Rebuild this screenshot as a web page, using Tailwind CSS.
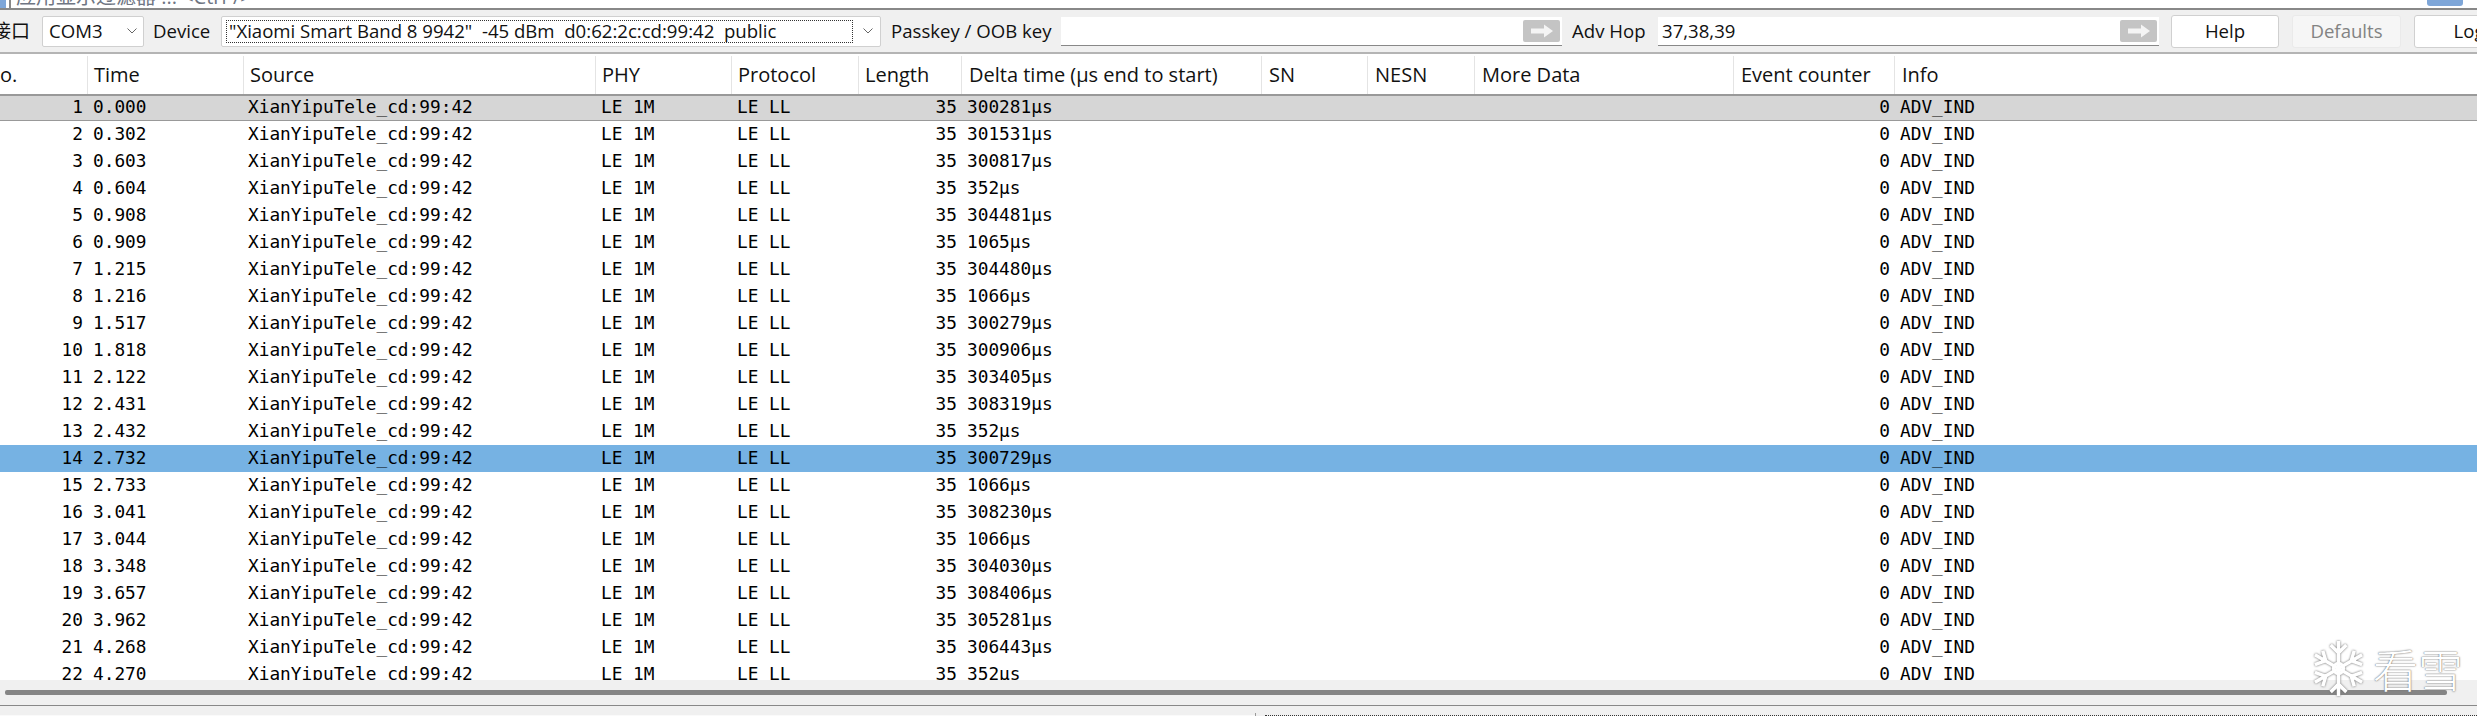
<!DOCTYPE html>
<html lang="zh">
<head>
<meta charset="UTF-8">
<title>Sniffer</title>
<script src="https://cdn.jsdelivr.net/npm/@tailwindcss/browser@4"></script>
</head>
<body class="w-[2477px] h-[716px] overflow-hidden bg-white font-['Open_Sans','Noto_Sans_CJK_SC',sans-serif] text-[#111]">

<!-- display filter bar, cut off at the top -->
<div class="h-[10px] overflow-hidden border-b-2 border-[#888] flex items-start">
    <div class="w-[6px] h-[8px] bg-[#7ea6d8] shrink-0"></div>
    <div class="w-[2px] h-[8px] ml-[3px] bg-[#888] shrink-0"></div>
    <div class="ml-[5px] text-[20px] leading-[22px] text-[#6f7683] whitespace-nowrap -translate-y-[14px]">应用显示过滤器 ... &lt;Ctrl-/&gt;</div>
    <div class="ml-auto mr-[14px] w-[36px] h-[6px] bg-[#7ea6d8] rounded-b-[3px] shrink-0"></div>
</div>

<!-- capture toolbar -->
<div class="h-[44px] bg-[#f0f0f0] border-b-2 border-[#b4b4b4] flex items-center text-[18.600px] leading-[28px] whitespace-nowrap overflow-hidden">
    <span class="w-[42px] shrink-0 -ml-[8px] text-[19px]">接口</span>
    <div class="w-[102px] h-[31px] ml-[8px] shrink-0 bg-white border border-[#d0d0d0] rounded-[2px] flex items-center justify-between pl-[6px] pr-[6px]">
        <span>COM3</span>
        <svg class="w-[10px] h-[6px]" viewBox="0 0 10 6"><path d="M0.5 0.5 5 5 9.5 0.5" fill="none" stroke="#666"/></svg>
    </div>
    <span class="ml-[9px] w-[68px] shrink-0">Device</span>
    <div class="w-[660px] h-[31px] shrink-0 bg-white border border-[#d0d0d0] rounded-[2px] flex items-center justify-between pl-[4px] pr-[7px]">
        <div class="w-[627px] h-[23px] border border-dotted border-[#333] flex items-center pl-[2px] whitespace-pre">"Xiaomi Smart Band 8 9942"  -45 dBm  d0:62:2c:cd:99:42  public</div>
        <svg class="w-[10px] h-[6px]" viewBox="0 0 10 6"><path d="M0.5 0.5 5 5 9.5 0.5" fill="none" stroke="#666"/></svg>
    </div>
    <span class="ml-[10px] w-[170px] shrink-0">Passkey / OOB key</span>
    <div class="w-[501px] h-[29px] shrink-0 bg-white border-b border-[#888] flex items-center justify-end pr-[2px]">
        <div class="w-[37px] h-[22px] bg-[#c4c4c4] rounded-[2px] flex items-center justify-center">
            <svg class="w-[24px] h-[14px]" viewBox="0 0 24 14"><path d="M1 4.500h13V0.500L23 7l-9 6.500V9.500H1z" fill="#f4f4f4"/></svg>
        </div>
    </div>
    <span class="ml-[10px] w-[86px] shrink-0">Adv Hop</span>
    <div class="w-[501px] h-[29px] shrink-0 bg-white border-b border-[#888] flex items-center justify-between pl-[4px] pr-[2px]">
        <span>37,38,39</span>
        <div class="w-[37px] h-[22px] bg-[#c4c4c4] rounded-[2px] flex items-center justify-center">
            <svg class="w-[24px] h-[14px]" viewBox="0 0 24 14"><path d="M1 4.500h13V0.500L23 7l-9 6.500V9.500H1z" fill="#f4f4f4"/></svg>
        </div>
    </div>
    <button class="ml-[12px] w-[108px] h-[33px] shrink-0 bg-white border border-[#d0d0d0] rounded-[3px]">Help</button>
    <button class="ml-[13px] w-[109px] h-[33px] shrink-0 bg-[#f6f6f6] border border-[#eaeaea] rounded-[3px] text-[#838383]">Defaults</button>
    <button class="ml-[13px] w-[110px] h-[33px] shrink-0 bg-white border border-[#d0d0d0] rounded-[3px]">Log</button>
</div>

<!-- packet list header -->
<div class="h-[38px] mt-[2px] grid grid-cols-[88px_156px_352px_136px_127px_103px_300px_106px_107px_259px_161px_1fr] text-[20px] leading-[38px] whitespace-nowrap overflow-hidden">
    <div class="border-r border-[#e4e4e4] -ml-[15px]">No.</div>
    <div class="border-r border-[#e4e4e4] pl-[6px]">Time</div>
    <div class="border-r border-[#e4e4e4] pl-[6px]">Source</div>
    <div class="border-r border-[#e4e4e4] pl-[6px]">PHY</div>
    <div class="border-r border-[#e4e4e4] pl-[6px]">Protocol</div>
    <div class="border-r border-[#e4e4e4] pl-[6px]">Length</div>
    <div class="border-r border-[#e4e4e4] pl-[7px]">Delta time (µs end to start)</div>
    <div class="border-r border-[#e4e4e4] pl-[7px]">SN</div>
    <div class="border-r border-[#e4e4e4] pl-[7px]">NESN</div>
    <div class="border-r border-[#e4e4e4] pl-[7px]">More Data</div>
    <div class="border-r border-[#e4e4e4] pl-[7px]">Event counter</div>
    <div class="pl-[7px]">Info</div>
</div>

<!-- packet rows -->
<div id="rows" class="h-[586px] overflow-hidden font-['DejaVu_Sans_Mono',monospace] text-[17.800px] leading-[25px] text-black"></div>

<!-- horizontal scrollbar -->
<div class="h-[26px] bg-[#f0f0f0] border-b border-[#888] flex items-start pl-[5px] pt-[10px]">
    <div class="w-[2442px] h-[5px] bg-[#858585] rounded-[2px]"></div>
</div>
<div class="h-[10px] bg-[#f0f0f0] flex items-end">
    <div class="w-[1255px] h-[1px] bg-[#fafafa]"></div>
    <div class="w-[1px] h-[3px] bg-[#999]"></div>
    <div class="w-[9px]"></div>
    <div class="flex-1 border-b border-dotted border-[#333]"></div>
</div>

<!-- watermark -->
<div class="absolute left-[2311px] top-[640px] flex items-center gap-[7px] text-white">
    <svg class="w-[55px] h-[57px] drop-shadow-[0_0_1px_#666]" viewBox="0 0 56 58" fill="none" stroke="#fff" stroke-width="3.500">
        <path d="M28 1v56M4 15l48 28M52 15 4 43M20 5l8 8 8-8M20 53l8-8 8 8M4 25l11-4-3-10M52 33l-11 4 3 10M52 25l-11-4 3-10M4 33l11 4-3 10"/>
        <circle cx="28" cy="29" r="5"/>
    </svg>
    <span class="text-[45px] leading-[50px] font-['Noto_Sans_CJK_SC'] font-light [text-shadow:0_0_2px_#777,0_0_1px_#777]">看雪</span>
</div>

<script>
    // packet data: no, time, delta
    const packets = [
        [1,'0.000','300281'],[2,'0.302','301531'],[3,'0.603','300817'],[4,'0.604','352'],
        [5,'0.908','304481'],[6,'0.909','1065'],[7,'1.215','304480'],[8,'1.216','1066'],
        [9,'1.517','300279'],[10,'1.818','300906'],[11,'2.122','303405'],[12,'2.431','308319'],
        [13,'2.432','352'],[14,'2.732','300729'],[15,'2.733','1066'],[16,'3.041','308230'],
        [17,'3.044','1066'],[18,'3.348','304030'],[19,'3.657','308406'],[20,'3.962','305281'],
        [21,'4.268','306443'],[22,'4.270','352']
    ];
    const cols = 'grid grid-cols-[88px_156px_352px_136px_127px_103px_300px_106px_107px_259px_161px_1fr] h-[27px] whitespace-nowrap';
    const rows = document.getElementById('rows');
    packets.forEach(([no, time, delta]) => {
        const row = document.createElement('div');
        let bg = '';
        if (no === 1) bg = ' bg-[#d6d6d6] shadow-[inset_0_2px_0_#999,inset_0_-1px_0_#999]';
        if (no === 14) bg = ' bg-[#76b2e3]';
        row.className = cols + bg;
        row.innerHTML = `<div class="text-right pr-[5px]">${no}</div>
            <div class="pl-[5px]">${time}</div>
            <div class="pl-[4px]">XianYipuTele_cd:99:42</div>
            <div class="pl-[5px]">LE 1M</div>
            <div class="pl-[5px]">LE LL</div>
            <div class="text-right pr-[5px]">35</div>
            <div class="pl-[5px]">${delta}µs</div>
            <div></div><div></div><div></div>
            <div class="text-right pr-[5px]">0</div>
            <div class="pl-[5px]">ADV_IND</div>`;
        rows.appendChild(row);
    });
</script>
</body>
</html>
